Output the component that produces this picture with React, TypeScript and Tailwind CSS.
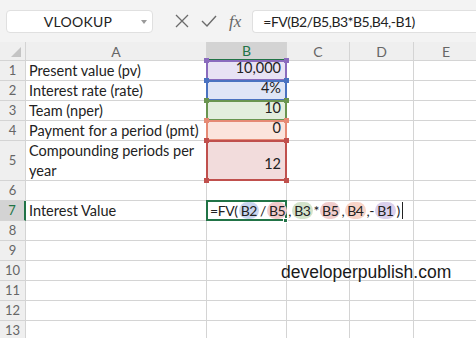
import React from 'react';

const GRID = 'border-r border-b border-[#d4d4d4]';

type Range = { bg: string; line: string; value: string; tall?: boolean };

const ranges: Range[] = [
  { bg: 'bg-[#e8e2f4]', line: 'border-[#8a6bbd]', value: '10,000' },
  { bg: 'bg-[#dfe5f6]', line: 'border-[#4a72c0]', value: '4%' },
  { bg: 'bg-[#e3eedd]', line: 'border-[#6a9550]', value: '10' },
  { bg: 'bg-[#fbe4dc]', line: 'border-[#e58a74]', value: '0' },
  { bg: 'bg-[#f2dcdc]', line: 'border-[#c0504d]', value: '12', tall: true },
];

const handleBg = ['bg-[#8a6bbd]', 'bg-[#4a72c0]', 'bg-[#6a9550]', 'bg-[#e58a74]', 'bg-[#c0504d]'];

const labels = [
  'Present value (pv)',
  'Interest rate (rate)',
  'Team (nper)',
  'Payment for a period (pmt)',
  'Compounding periods per year',
];

function RowHead({ n, active }: { n: number; active?: boolean }) {
  return (
    <div
      className={`flex items-center justify-center text-[13px] ${
        active
          ? 'bg-[#d3d3d3] text-[#217346] border-r-2 border-r-[#217346] border-b border-b-[#d4d4d4]'
          : 'bg-[#efefef] text-[#666] border-r border-b border-[#d4d4d4]'
      }`}
    >
      {n}
    </div>
  );
}

function Pill({ children, bg }: { children: React.ReactNode; bg: string }) {
  return <span className={`relative rounded-full px-[2px] mx-[1px] leading-[17px] ${bg}`}>{children}</span>;
}

function RangeCell({ r, i }: { r: Range; i: number }) {
  const h = handleBg[i];
  return (
    <div className={`relative ${r.bg} ${GRID} flex items-end justify-end pr-[5px] pb-[1px] text-[14.5px] text-[#222]`}>
      <span className={r.tall ? 'mb-[4px]' : ''}>{r.value}</span>
      <div className={`absolute left-[-1px] top-[-1px] right-[-1px] bottom-[-1px] border-2 ${r.line}`} />
      <div className={`absolute left-[-3px] top-[-3px] w-[5px] h-[5px] ${h}`} />
      <div className={`absolute right-[-3px] top-[-3px] w-[5px] h-[5px] ${h}`} />
      <div className={`absolute left-[-3px] bottom-[-3px] w-[5px] h-[5px] ${h}`} />
      <div className={`absolute right-[-3px] bottom-[-3px] w-[5px] h-[5px] ${h}`} />
    </div>
  );
}

export default function App() {
  return (
    <div className="w-[476px] h-[338px] overflow-hidden bg-white font-['Lato',sans-serif] text-[#222]">
      {/* formula bar */}
      <div className="h-[42px] bg-[#f3f3f3] flex items-center">
        <div className="ml-[6px] w-[147px] h-[23px] bg-white rounded-[4px] border border-[#e0e0e0] flex items-center relative">
          <span className="flex-1 text-center text-[14px] tracking-[0.3px] pr-[3px]">VLOOKUP</span>
          <svg className="absolute right-[5px] top-[9px]" width="6" height="4" viewBox="0 0 6 4">
            <path d="M0 0 L6 0 L3 4 Z" fill="#9a9a9a" />
          </svg>
        </div>
        <div className="flex items-center ml-[22px] gap-[12px]">
          <svg width="14" height="14" viewBox="0 0 14 14">
            <path d="M1 1 L13 13 M13 1 L1 13" stroke="#6b6b6b" strokeWidth="1.3" fill="none" />
          </svg>
          <svg width="16" height="14" viewBox="0 0 16 14">
            <path d="M1 7 L6 12 L15 2" stroke="#6b6b6b" strokeWidth="1.4" fill="none" />
          </svg>
          <span className="font-['Liberation_Serif',serif] italic text-[17px] text-[#666] leading-none">fx</span>
        </div>
        <div className="ml-[11px] flex-1 h-[23px] bg-white rounded-l-[4px] border border-[#e0e0e0] border-r-0 flex items-center pl-[10px] text-[14px] tracking-[-0.5px]">
          =FV(B2/B5,B3*B5,B4,-B1)
        </div>
      </div>

      {/* sheet */}
      <div className="grid grid-cols-[26px_181px_80px_63px_64px_1fr] grid-rows-[19px_20px_20px_20px_20px_40px_20px_20px_20px_20px_20px_20px_20px_20px] text-[14.5px]">
        {/* header row */}
        <div className="bg-[#efefef] border-r border-b border-[#d4d4d4] relative">
          <svg className="absolute right-[4px] bottom-[3px]" width="10" height="10" viewBox="0 0 10 10">
            <path d="M10 0 L10 10 L0 10 Z" fill="#c4c4c4" />
          </svg>
        </div>
        <div className="bg-[#efefef] border-r border-b border-[#d4d4d4] flex items-center justify-center text-[14px] text-[#666]">A</div>
        <div className="bg-[#d3d3d3] border-r border-[#d4d4d4] border-b-2 border-b-[#217346] flex items-center justify-center text-[14px] text-[#217346]">B</div>
        <div className="bg-[#efefef] border-r border-b border-[#d4d4d4] flex items-center justify-center text-[14px] text-[#666]">C</div>
        <div className="bg-[#efefef] border-r border-b border-[#d4d4d4] flex items-center justify-center text-[14px] text-[#666]">D</div>
        <div className="bg-[#efefef] border-b border-[#d4d4d4] flex items-center justify-center text-[14px] text-[#666] pl-[2px]">E</div>

        {ranges.map((r, i) => (
          <React.Fragment key={i}>
            <RowHead n={i + 1} />
            <div className={`${GRID} pl-[3px] flex items-center leading-[20px]`}>
              {r.tall ? (
                <span>
                  Compounding periods per
                  <br />
                  year
                </span>
              ) : (
                labels[i]
              )}
            </div>
            <RangeCell r={r} i={i} />
            <div className={GRID} />
            <div className={GRID} />
            <div className="border-b border-[#d4d4d4]" />
          </React.Fragment>
        ))}

        {/* row 6 */}
        <RowHead n={6} />
        <div className={GRID} />
        <div className={GRID} />
        <div className={GRID} />
        <div className={GRID} />
        <div className="border-b border-[#d4d4d4]" />

        {/* row 7 */}
        <RowHead n={7} active />
        <div className={`${GRID} pl-[3px] flex items-center`}>Interest Value</div>
        <div className={`col-span-3 ${GRID} relative flex items-center pl-[3px] whitespace-nowrap text-[14px] tracking-[-0.4px]`}>
          <div className="absolute left-[-1px] top-[-1px] w-[81px] h-[21px] border-2 border-[#217346]" />
          <div className="absolute left-[76px] top-[17px] w-[5px] h-[5px] bg-[#217346] border border-white" />
          <span className="relative">=FV(</span>
          <Pill bg="bg-[#c9d5f0]">B2</Pill>
          <span className="relative">/</span>
          <Pill bg="bg-[#f0cccc]">B5</Pill>
          <span className="relative">,</span>
          <Pill bg="bg-[#d3e3cb]">B3</Pill>
          <span className="relative">*</span>
          <Pill bg="bg-[#f0cccc]">B5</Pill>
          <span className="relative">,</span>
          <Pill bg="bg-[#f8d5c8]">B4</Pill>
          <span className="relative">,-</span>
          <Pill bg="bg-[#dad0ec]">B1</Pill>
          <span className="relative">)</span>
          <span className="relative ml-[2px] w-[1px] h-[17px] bg-[#222]" />
        </div>
        <div className="border-b border-[#d4d4d4]" />

        {/* rows 8-13 */}
        {[8, 9, 10, 11, 12, 13].map(n => (
          <React.Fragment key={n}>
            <RowHead n={n} />
            <div className={GRID} />
            <div className={GRID} />
            <div className={`${GRID} relative overflow-visible`}>
              {n === 10 && (
                <span className="absolute left-[-6px] top-[-2px] whitespace-nowrap font-['Liberation_Sans',sans-serif] text-[17.5px] text-[#1a1a1a]">
                  developerpublish.com
                </span>
              )}
            </div>
            <div className={GRID} />
            <div className="border-b border-[#d4d4d4]" />
          </React.Fragment>
        ))}
      </div>
    </div>
  );
}
